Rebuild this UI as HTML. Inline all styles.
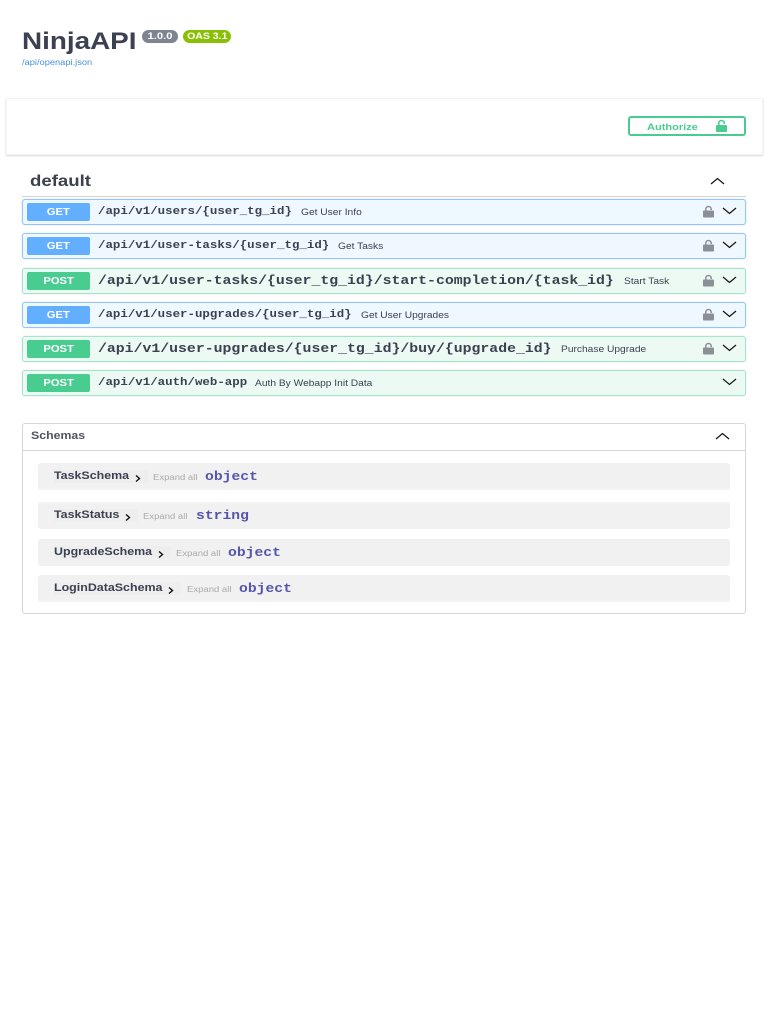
<!DOCTYPE html>
<html><head><meta charset="utf-8"><style>
html,body{margin:0;padding:0;background:#fff}
body{width:768px;height:1024px;position:relative;overflow:hidden;font-family:"Liberation Sans",sans-serif;color:#3b4151}
#w{position:absolute;left:0;top:0;width:768px;height:1024px;filter:blur(.35px)}
.a{position:absolute;white-space:nowrap}
.s{transform-origin:0 50%}
.op{position:absolute;left:22px;width:722px;height:24px;border:1px solid;border-radius:3px;box-sizing:content-box;box-shadow:0 0 2px rgba(0,0,0,.12)}
.get{background:#eff7ff;border-color:#8fc6fe}
.post{background:#edfaf4;border-color:#a3e6cb}
.m{position:absolute;left:4px;top:3px;width:63px;height:18px;border-radius:2px;color:#fff;font-weight:bold;font-size:10px;line-height:20px;text-align:center}
.m span{display:inline-block;transform:scaleX(1.12)}
.get .m{background:#61affe}.post .m{background:#49cc90}
.p{position:absolute;left:75px;top:0;line-height:25px;font-family:"Liberation Mono",monospace;font-weight:bold;color:#3b4151;white-space:nowrap;transform-origin:0 50%}
.p.sm{font-size:11px;transform:scaleX(1.13)}
.p.lg{font-size:13px;top:-1px;transform:scaleX(1.14)}
.d{position:absolute;top:0;line-height:25px;font-size:9px;color:#3b4151;white-space:nowrap;transform:scaleX(1.135);transform-origin:0 50%}
svg{position:absolute;display:block}
.mod{position:absolute;left:38px;width:692px;height:27px;background:#f1f1f1;border-radius:3px}
.mn{position:absolute;left:16px;top:0;line-height:27px;font-size:11px;font-weight:bold;color:#3b4151;white-space:nowrap;transform:scaleX(1.13);transform-origin:0 50%}
.hl{position:absolute;left:16px;top:7px;height:13px;background:#eeeeee;border-radius:2px}
.ex{position:absolute;top:1px;line-height:27px;font-size:8px;color:#aaa;white-space:nowrap;transform:scaleX(1.19);transform-origin:0 50%}
.t{position:absolute;top:0;line-height:27px;font-family:"Liberation Mono",monospace;font-weight:bold;font-size:13px;color:#55a;white-space:nowrap;transform:scaleX(1.13);transform-origin:0 50%}
.b{position:absolute;top:30px;height:13px;border-radius:7px;color:#fff;font-size:9px;font-weight:bold;line-height:13px;text-align:center}
.b span{display:inline-block}
</style></head><body><div id="w">
<div class="a s" style="left:22px;top:27px;font-size:24px;font-weight:bold;line-height:30px;transform:scaleX(1.16)">NinjaAPI</div>
<div class="b" style="left:142px;width:36px;background:#7d8492"><span style="transform:scaleX(1.25)">1.0.0</span></div>
<div class="b" style="left:183px;width:48px;background:#89bf04"><span style="transform:scaleX(1.17)">OAS 3.1</span></div>
<div class="a s" style="left:22px;top:57px;font-size:8px;line-height:12px;color:#4990e2;transform:scaleX(1.16)">/api/openapi.json</div>

<div class="a" style="left:6px;top:98px;width:757px;height:57px;background:#fff;border:1px solid #f3f3f3;box-sizing:border-box;box-shadow:0 1px 2px rgba(0,0,0,.16)"></div>
<div class="a" style="left:628px;top:116px;width:118px;height:20px;border:2px solid #49cc90;border-radius:3px;box-sizing:border-box"></div>
<div class="a s" style="left:647px;top:117px;font-size:9.5px;font-weight:bold;line-height:21px;color:#49cc90;transform:scaleX(1.16)">Authorize</div>
<svg style="left:715px;top:119px" width="13" height="14" viewBox="0 0 13 14"><path d="M3.8 6.5V4.2a2.7 2.7 0 0 1 5.4 0V5" fill="none" stroke="#49cc90" stroke-width="1.6"/><rect x="1" y="6" width="11" height="7" rx="1" fill="#49cc90"/></svg>

<div class="a s" style="left:30px;top:172px;font-size:15.5px;font-weight:bold;line-height:20px;transform:scaleX(1.2)">default</div>
<div class="a" style="left:22px;top:196px;width:724px;height:1px;background:#d0d2d6"></div>
<svg style="left:710px;top:176px" width="15" height="10" viewBox="0 0 15 10"><path d="M1 8L7.5 2.5L14 8" fill="none" stroke="#111" stroke-width="1.2"/></svg>

<div class="op get" style="top:199px"><div class="m"><span>GET</span></div><div class="p sm">/api/v1/users/{user_tg_id}</div><div class="d" style="left:278px">Get User Info</div>
<svg style="left:679px;top:5px" width="13" height="13" viewBox="0 0 13 13"><path d="M3.8 6V4.2a2.7 2.7 0 0 1 5.4 0V5" fill="none" stroke="#8b8f96" stroke-width="1.5"/><rect x="1" y="5.5" width="11" height="7" rx="1" fill="#8b8f96"/></svg>
<svg style="left:699px;top:6px" width="15" height="10" viewBox="0 0 15 10"><path d="M1 2L7.5 7.5L14 2" fill="none" stroke="#111" stroke-width="1.2"/></svg></div>

<div class="op get" style="top:233px"><div class="m"><span>GET</span></div><div class="p sm">/api/v1/user-tasks/{user_tg_id}</div><div class="d" style="left:315px">Get Tasks</div>
<svg style="left:679px;top:5px" width="13" height="13" viewBox="0 0 13 13"><path d="M3.8 6V4.2a2.7 2.7 0 0 1 5.4 0V5" fill="none" stroke="#8b8f96" stroke-width="1.5"/><rect x="1" y="5.5" width="11" height="7" rx="1" fill="#8b8f96"/></svg>
<svg style="left:699px;top:6px" width="15" height="10" viewBox="0 0 15 10"><path d="M1 2L7.5 7.5L14 2" fill="none" stroke="#111" stroke-width="1.2"/></svg></div>

<div class="op post" style="top:268px"><div class="m"><span>POST</span></div><div class="p lg">/api/v1/user-tasks/{user_tg_id}/start-completion/{task_id}</div><div class="d" style="left:601px">Start Task</div>
<svg style="left:679px;top:5px" width="13" height="13" viewBox="0 0 13 13"><path d="M3.8 6V4.2a2.7 2.7 0 0 1 5.4 0V5" fill="none" stroke="#8b8f96" stroke-width="1.5"/><rect x="1" y="5.5" width="11" height="7" rx="1" fill="#8b8f96"/></svg>
<svg style="left:699px;top:6px" width="15" height="10" viewBox="0 0 15 10"><path d="M1 2L7.5 7.5L14 2" fill="none" stroke="#111" stroke-width="1.2"/></svg></div>

<div class="op get" style="top:302px"><div class="m"><span>GET</span></div><div class="p sm">/api/v1/user-upgrades/{user_tg_id}</div><div class="d" style="left:338px">Get User Upgrades</div>
<svg style="left:679px;top:5px" width="13" height="13" viewBox="0 0 13 13"><path d="M3.8 6V4.2a2.7 2.7 0 0 1 5.4 0V5" fill="none" stroke="#8b8f96" stroke-width="1.5"/><rect x="1" y="5.5" width="11" height="7" rx="1" fill="#8b8f96"/></svg>
<svg style="left:699px;top:6px" width="15" height="10" viewBox="0 0 15 10"><path d="M1 2L7.5 7.5L14 2" fill="none" stroke="#111" stroke-width="1.2"/></svg></div>

<div class="op post" style="top:336px"><div class="m"><span>POST</span></div><div class="p lg">/api/v1/user-upgrades/{user_tg_id}/buy/{upgrade_id}</div><div class="d" style="left:538px">Purchase Upgrade</div>
<svg style="left:679px;top:5px" width="13" height="13" viewBox="0 0 13 13"><path d="M3.8 6V4.2a2.7 2.7 0 0 1 5.4 0V5" fill="none" stroke="#8b8f96" stroke-width="1.5"/><rect x="1" y="5.5" width="11" height="7" rx="1" fill="#8b8f96"/></svg>
<svg style="left:699px;top:6px" width="15" height="10" viewBox="0 0 15 10"><path d="M1 2L7.5 7.5L14 2" fill="none" stroke="#111" stroke-width="1.2"/></svg></div>

<div class="op post" style="top:370px"><div class="m"><span>POST</span></div><div class="p sm">/api/v1/auth/web-app</div><div class="d" style="left:232px">Auth By Webapp Init Data</div>
<svg style="left:699px;top:6px" width="15" height="10" viewBox="0 0 15 10"><path d="M1 2L7.5 7.5L14 2" fill="none" stroke="#111" stroke-width="1.2"/></svg></div>

<div class="a" style="left:22px;top:423px;width:724px;height:191px;border:1px solid #d5d6d9;border-radius:3px;box-sizing:border-box"></div>
<div class="a" style="left:22px;top:450px;width:724px;height:1px;background:#d5d6d9"></div>
<div class="a s" style="left:30.5px;top:423px;font-size:11px;font-weight:bold;line-height:26px;color:#505560;transform:scaleX(1.12)">Schemas</div>
<svg style="left:715px;top:431px" width="15" height="10" viewBox="0 0 15 10"><path d="M1 8L7.5 2.5L14 8" fill="none" stroke="#111" stroke-width="1.2"/></svg>

<div class="mod" style="top:463px"><div class="hl" style="width:94px"></div><div class="mn">TaskSchema</div><svg style="left:96px;top:11px" width="8" height="9" viewBox="0 0 8 9"><path d="M2 1.5L5.5 4.5L2 7.5" fill="none" stroke="#111" stroke-width="1.4"/></svg><div class="ex" style="left:115px">Expand all</div><div class="t" style="left:167px">object</div></div>
<div class="mod" style="top:502px"><div class="hl" style="width:84px"></div><div class="mn">TaskStatus</div><svg style="left:86px;top:11px" width="8" height="9" viewBox="0 0 8 9"><path d="M2 1.5L5.5 4.5L2 7.5" fill="none" stroke="#111" stroke-width="1.4"/></svg><div class="ex" style="left:105px">Expand all</div><div class="t" style="left:158px">string</div></div>
<div class="mod" style="top:539px"><div class="hl" style="width:117px"></div><div class="mn">UpgradeSchema</div><svg style="left:119px;top:11px" width="8" height="9" viewBox="0 0 8 9"><path d="M2 1.5L5.5 4.5L2 7.5" fill="none" stroke="#111" stroke-width="1.4"/></svg><div class="ex" style="left:138px">Expand all</div><div class="t" style="left:190px">object</div></div>
<div class="mod" style="top:575px"><div class="hl" style="width:127px"></div><div class="mn">LoginDataSchema</div><svg style="left:129px;top:11px" width="8" height="9" viewBox="0 0 8 9"><path d="M2 1.5L5.5 4.5L2 7.5" fill="none" stroke="#111" stroke-width="1.4"/></svg><div class="ex" style="left:149px">Expand all</div><div class="t" style="left:201px">object</div></div>
</div></body></html>
